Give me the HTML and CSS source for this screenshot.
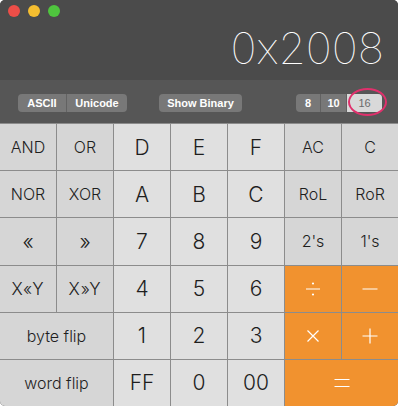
FILE: index.html
```html
<!DOCTYPE html>
<html lang="en">
<head>
    <meta charset="UTF-8">
    <title>Programmer Calculator</title>
    <link rel="stylesheet" href="styles.css">
</head>
<body>
    <div class="window">
        <div class="top">
            <div class="lights">
                <span class="light red"></span>
                <span class="light yellow"></span>
                <span class="light green"></span>
            </div>
            <div class="display">0x2008</div>
        </div>
        <div class="toolbar">
            <div class="segmented">
                <span class="seg seg-ascii">ASCII</span>
                <span class="seg seg-unicode">Unicode</span>
            </div>
            <div class="segmented binary">
                <span class="seg seg-binary">Show Binary</span>
            </div>
            <div class="segmented base">
                <span class="seg seg-8">8</span>
                <span class="seg seg-10">10</span>
                <span class="seg seg-16 selected">16</span>
                <span class="circle"></span>
            </div>
        </div>
        <div class="keys">
            <div class="key fn">AND</div>
            <div class="key fn">OR</div>
            <div class="key num">D</div>
            <div class="key num">E</div>
            <div class="key num">F</div>
            <div class="key fn">AC</div>
            <div class="key fn">C</div>

            <div class="key fn">NOR</div>
            <div class="key fn">XOR</div>
            <div class="key num">A</div>
            <div class="key num">B</div>
            <div class="key num">C</div>
            <div class="key fn">RoL</div>
            <div class="key fn">RoR</div>

            <div class="key fn shift">&laquo;</div>
            <div class="key fn shift">&raquo;</div>
            <div class="key num">7</div>
            <div class="key num">8</div>
            <div class="key num">9</div>
            <div class="key fn">2's</div>
            <div class="key fn">1's</div>

            <div class="key fn xy">X&laquo;Y</div>
            <div class="key fn xy">X&raquo;Y</div>
            <div class="key num">4</div>
            <div class="key num">5</div>
            <div class="key num">6</div>
            <div class="key op">
                <svg width="16" height="14" viewBox="0 0 16 14"><path d="M1 7h14" stroke="#fff" stroke-width="1.2"/><circle cx="8" cy="1.5" r="1.1" fill="#fff"/><circle cx="8" cy="12.5" r="1.1" fill="#fff"/></svg>
            </div>
            <div class="key op">
                <svg width="16" height="14" viewBox="0 0 16 14"><path d="M0.5 7h15" stroke="#fff" stroke-width="1.2"/></svg>
            </div>

            <div class="key fn wide">byte flip</div>
            <div class="key num">1</div>
            <div class="key num">2</div>
            <div class="key num">3</div>
            <div class="key op">
                <svg width="14" height="14" viewBox="0 0 14 14"><path d="M1.5 1.5l11 11M12.5 1.5l-11 11" stroke="#fff" stroke-width="1.2"/></svg>
            </div>
            <div class="key op">
                <svg width="16" height="16" viewBox="0 0 16 16"><path d="M0.5 8h15M8 0.5v15" stroke="#fff" stroke-width="1.2"/></svg>
            </div>

            <div class="key fn wide">word flip</div>
            <div class="key num">FF</div>
            <div class="key num">0</div>
            <div class="key num">00</div>
            <div class="key op wide">
                <svg width="16" height="10" viewBox="0 0 16 10"><path d="M0.5 1.5h15M0.5 8.5h15" stroke="#fff" stroke-width="1.2"/></svg>
            </div>
        </div>
    </div>
</body>
</html>
```

FILE: styles.css
```css
body {
    margin: 0;
    background-color: #ffffff;
    font-family: "Liberation Sans", Arial, sans-serif;
}
.window {
    width: 398px;
    height: 406px;
    border-radius: 5px;
    overflow: hidden;
    background-color: #4b4b4b;
}
.top {
    height: 80px;
    background-color: #4b4b4b;
}
.lights {
    display: flex;
    gap: 8px;
    padding: 5px 0 0 8px;
}
.light {
    width: 12px;
    height: 12px;
    border-radius: 50%;
}
.red {
    background-color: #ed4e48;
}
.yellow {
    background-color: #f5be30;
}
.green {
    background-color: #4fc53e;
}
.display {
    text-align: right;
    padding-right: 14px;
    color: #ffffff;
    font-family: Inter, "Noto Sans", sans-serif;
    font-weight: 100;
    font-size: 44px;
    line-height: 44px;
    margin-top: 9px;
}
.toolbar {
    height: 43px;
    background-color: #565656;
    display: flex;
    align-items: flex-start;
    padding: 14px 16px 0 18px;
    box-sizing: border-box;
}
.segmented {
    display: flex;
    height: 18px;
    border-radius: 4px;
    background-color: #787878;
    position: relative;
}
.seg {
    color: #ffffff;
    font-weight: bold;
    font-size: 11px;
    line-height: 18px;
    text-align: center;
}
.seg + .seg {
    border-left: 1px solid #626262;
}
.seg-ascii {
    width: 48px;
}
.seg-unicode {
    width: 60px;
}
.binary {
    margin-left: 32px;
}
.seg-binary {
    width: 83px;
}
.base {
    margin-left: auto;
}
.seg-8 {
    width: 24px;
}
.seg-10 {
    width: 25px;
}
.seg-16 {
    width: 35px;
}
.selected {
    background-color: #d9d9d9;
    color: #6b6b6b;
    font-weight: normal;
    border-radius: 0 4px 4px 0;
}
.circle {
    position: absolute;
    left: 52px;
    top: -6px;
    width: 35px;
    height: 24px;
    border: 2.5px solid #e0306c;
    border-radius: 50%;
}
.keys {
    display: grid;
    grid-template-columns: repeat(7, 1fr);
    grid-template-rows: repeat(6, 1fr);
    gap: 1px;
    height: 282px;
    border-top: 1px solid #8c8c8c;
    background-color: #8c8c8c;
}
.key {
    display: flex;
    align-items: center;
    justify-content: center;
    font-family: Inter, "Noto Sans", sans-serif;
    font-weight: 300;
    color: #1e1e1e;
}
.fn {
    background-color: #d6d6d6;
    font-size: 16px;
}
.fn.shift {
    font-size: 21px;
}
.fn.xy {
    font-size: 17px;
    letter-spacing: 1px;
}
.num {
    background-color: #e0e0e0;
    font-size: 21px;
}
.op {
    background-color: #f1922f;
}
.wide {
    grid-column: span 2;
}
```
